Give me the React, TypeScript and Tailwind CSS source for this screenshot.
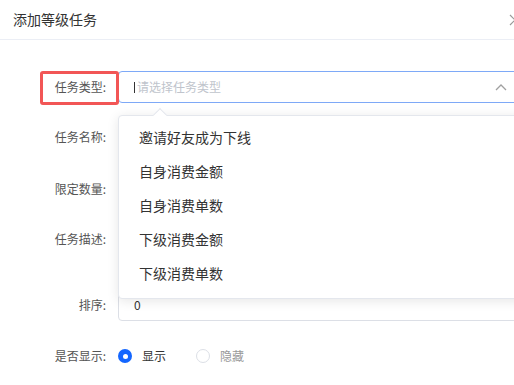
import React from "react";

const options = ["邀请好友成为下线", "自身消费金额", "自身消费单数", "下级消费金额", "下级消费单数"];

function Row({ label, className = "", children }: { label: string; className?: string; children?: React.ReactNode }) {
  return (
    <div className={`flex items-start ${className}`}>
      <label className="w-[118px] shrink-0 pr-[12px] text-right text-[12px] leading-[32px] text-[#555]">
        {label}
      </label>
      <div className="flex-1">{children}</div>
    </div>
  );
}

export default function App() {
  return (
    <div className="relative h-[385px] w-[514px] overflow-hidden bg-white font-['Noto_Sans_CJK_SC','Noto_Sans',sans-serif]">
      <div className="flex h-[40px] items-center justify-between border-b border-[#ebeef5] pl-[13px]">
        <span className="text-[14px] text-[#333]">添加等级任务</span>
        <svg className="mr-[-8px]" width="14" height="14" viewBox="0 0 14 14">
          <path d="M2 2 L12 12 M12 2 L2 12" stroke="#9a9a9a" strokeWidth="1.2" fill="none" />
        </svg>
      </div>

      <div className="w-[560px] pt-[31px]">
        <Row label="任务类型:">
          <div className="flex h-[32px] items-center rounded-[4px] border border-[#7ea9f7] pl-[15px] pr-[52px]">
            <span className="mr-[2px] h-[11px] w-px bg-[#333]" />
            <span className="flex-1 text-[12px] text-[#c0c4cc]">请选择任务类型</span>
            <svg width="12" height="8" viewBox="0 0 12 8">
              <path d="M1 7 L6 2 L11 7" stroke="#a0a0a0" strokeWidth="1.3" fill="none" />
            </svg>
          </div>
        </Row>
        <Row label="任务名称:" className="mt-[18px]">
          <div className="h-[32px] rounded-[4px] border border-[#dcdfe6]" />
        </Row>
        <Row label="限定数量:" className="mt-[20px]">
          <div className="h-[32px] rounded-[4px] border border-[#dcdfe6]" />
        </Row>
        <Row label="任务描述:" className="mt-[18px]">
          <div className="h-[48px] rounded-[4px] border border-[#dcdfe6]" />
        </Row>
        <Row label="排序:" className="mt-[18px]">
          <div className="flex h-[32px] items-center rounded-[4px] border border-[#dcdfe6] pl-[15px] text-[12px] text-[#333]">
            0
          </div>
        </Row>
        <Row label="是否显示:" className="mt-[19px]">
          <div className="flex h-[32px] items-center text-[12px]">
            <span className="flex h-[14px] w-[14px] items-center justify-center rounded-full bg-[#1366ff]">
              <span className="h-[5px] w-[5px] rounded-full bg-white" />
            </span>
            <span className="ml-[10px] text-[#333]">显示</span>
            <span className="ml-[30px] h-[14px] w-[14px] rounded-full border border-[#dcdfe6]" />
            <span className="ml-[10px] text-[#999]">隐藏</span>
          </div>
        </Row>
      </div>

      <div className="absolute left-[40px] top-[71px] h-[34px] w-[79px] rounded-[3px] border-[3px] border-[#f25656]" />

      <div className="absolute left-[118px] top-[115px] w-[420px] rounded-[4px] border border-[#e4e7ed] bg-white pb-[8px] pt-[4px] shadow-[0_2px_12px_rgba(0,0,0,0.1)]">
        <div className="absolute left-[36px] top-[-6px] h-[10px] w-[10px] rotate-45 border-l border-t border-[#e4e7ed] bg-white" />
        {options.map((o) => (
          <div key={o} className="flex h-[34px] items-center pl-[20px] text-[14px] text-[#333]">
            {o}
          </div>
        ))}
      </div>
    </div>
  );
}
